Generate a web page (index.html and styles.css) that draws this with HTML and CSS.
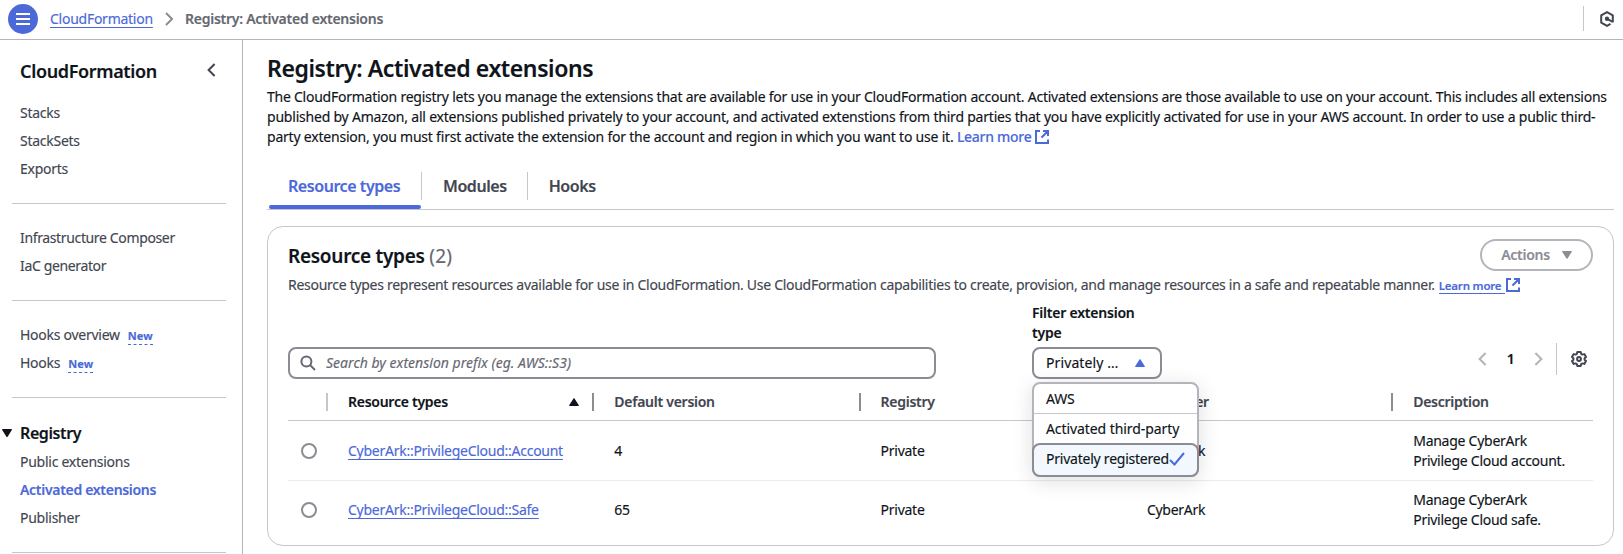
FILE: index.html
```html
<!DOCTYPE html>
<html lang="en">
<head>
<meta charset="utf-8">
<title>CloudFormation - Registry</title>
<link rel="stylesheet" href="styles.css">
</head>
<body>
<header class="topbar">
  <button class="menu-button" aria-label="Menu">
    <svg width="14" height="14" viewBox="0 0 14 14" fill="none" stroke="#fff" stroke-width="2"><path d="M0 2h14M0 7h14M0 12h14"/></svg>
  </button>
  <a class="link crumb" href="#">CloudFormation</a>
  <svg class="crumb-sep" width="8" height="14" viewBox="0 0 8 14" fill="none" stroke="#8c8c94" stroke-width="2"><path d="M1 1l6 6-6 6"/></svg>
  <span class="crumb-current">Registry: Activated extensions</span>
  <div class="tools">
    <svg width="16" height="18" viewBox="0 0 16 18" fill="none" stroke="#424650" stroke-width="2" stroke-linejoin="round"><path d="M13.8 12.2V5.4L8 2.1 2.2 5.4v7.2L8 15.9l3.5-2"/><circle cx="8" cy="8.8" r="1.2" fill="#424650"/><path d="M8 8.8l5.8 3"/></svg>
  </div>
</header>
<div class="layout">
  <nav class="sidebar">
    <div class="side-head">
      <h2>CloudFormation</h2>
      <svg width="9" height="14" viewBox="0 0 9 14" fill="none" stroke="#424650" stroke-width="2"><path d="M7.6 1L1.6 7l6 6"/></svg>
    </div>
    <ul class="nav-group">
      <li>Stacks</li><li>StackSets</li><li>Exports</li>
    </ul>
    <ul class="nav-group tight">
      <li>Infrastructure Composer</li><li>IaC generator</li>
    </ul>
    <ul class="nav-group">
      <li>Hooks overview<span class="new">New</span></li><li>Hooks<span class="new">New</span></li>
    </ul>
    <div class="section-title">
      <svg width="10" height="9" viewBox="0 0 10 9" fill="#0f141a"><path d="M.7 0h8.6q.9.2.5 1L5.6 7.8q-.6.7-1.2 0L.2 1Q-.1.2.7 0z"/></svg>
      <h3>Registry</h3>
    </div>
    <ul class="nav-group last">
      <li>Public extensions</li><li class="active">Activated extensions</li><li>Publisher</li>
    </ul>
  </nav>
  <main class="content">
    <h1>Registry: Activated extensions</h1>
    <p class="intro">
      <span class="l1">The CloudFormation registry lets you manage the extensions that are available for use in your CloudFormation account. Activated extensions are those available to use on your account. This includes all extensions</span>
      <span class="l2">published by Amazon, all extensions published privately to your account, and activated extenstions from third parties that you have explicitly activated for use in your AWS account. In order to use a public third-</span>
      <span class="l3">party extension, you must first activate the extension for the account and region in which you want to use it. <a class="learn" href="#">Learn more <svg class="ext" width="14" height="14" viewBox="0 0 14 14" fill="none" stroke="#4c69da" stroke-width="2"><path d="M5 1H1v12h12V9.5M8 1h5v5M13 1L6.5 7.5"/></svg></a></span>
    </p>
    <div class="tabs">
      <div class="tab selected"><span>Resource types</span></div>
      <div class="tab"><span>Modules</span></div>
      <div class="tab"><span>Hooks</span></div>
    </div>
    <section class="card">
      <div class="card-head">
        <h2>Resource types <span class="count">(2)</span></h2>
        <button class="actions">Actions
          <svg width="10" height="8" viewBox="0 0 10 8" fill="#8c8c94"><path d="M.6 0h8.8q.8.2.4.8L5.5 7.6q-.5.6-1 0L.2.8Q-.2.2.6 0z"/></svg>
        </button>
      </div>
      <p class="desc"><span>Resource types represent resources available for use in CloudFormation. Use CloudFormation capabilities to create, provision, and manage resources in a safe and repeatable manner.</span><a class="learn-small" href="#">Learn more</a><svg width="14" height="14" viewBox="0 0 14 14" fill="none" stroke="#4c69da" stroke-width="2"><path d="M5 1H1v12h12V9.5M8 1h5v5M13 1L6.5 7.5"/></svg></p>
      <div class="filters">
        <div class="search">
          <svg width="16" height="16" viewBox="0 0 16 16" fill="none" stroke="#656871" stroke-width="2"><circle cx="6.4" cy="6.4" r="5"/><path d="M10 10l5 5"/></svg>
          <span>Search by extension prefix (eg. AWS::S3)</span>
        </div>
        <div class="filter">
          <label>Filter extension type</label>
          <div class="select">
            <span>Privately …</span>
            <svg width="10" height="8" viewBox="0 0 10 8" fill="#4c69da"><path d="M.6 8h8.8q.8-.2.4-.8L5.5.4q-.5-.6-1 0L.2 7.2q-.4.6.4.8z"/></svg>
            <div class="dropdown">
              <div class="option">AWS</div>
              <div class="option wide">Activated third-party</div>
              <div class="option chosen">Privately registered<svg width="16" height="14" viewBox="0 0 16 14" fill="none" stroke="#4c69da" stroke-width="2"><path d="M1 8l4.5 4.5L15 1"/></svg></div>
            </div>
          </div>
        </div>
        <div class="pager">
          <svg width="9" height="14" viewBox="0 0 9 14" fill="none" stroke="#b4b4bb" stroke-width="2"><path d="M7.6 1L1.6 7l6 6"/></svg>
          <b>1</b>
          <svg width="9" height="14" viewBox="0 0 9 14" fill="none" stroke="#b4b4bb" stroke-width="2"><path d="M1.4 1l6 6-6 6"/></svg>
          <div class="prefs">
            <svg width="16" height="16" viewBox="0 0 16 16" fill="none" stroke="#424650" stroke-width="2" stroke-linejoin="round"><path d="M6.3 1h3.4l.5 1.9 1.2.7 1.9-.5L15 6l-1.4 1.3v1.4L15 10l-1.7 2.9-1.9-.5-1.2.7-.5 1.9H6.3l-.5-1.9-1.2-.7-1.9.5L1 10l1.4-1.3V7.3L1 6l1.7-2.9 1.9.5 1.2-.7z"/><circle cx="8" cy="8" r="1.9"/></svg>
          </div>
        </div>
      </div>
      <div class="table">
        <div class="row head">
          <div class="cell pick"></div>
          <div class="cell sorted">Resource types
            <svg width="10" height="8" viewBox="0 0 10 8" fill="#0f141a"><path d="M.6 8h8.8q.8-.2.4-.8L5.5.4q-.5-.6-1 0L.2 7.2q-.4.6.4.8z"/></svg>
          </div>
          <div class="cell">Default version</div>
          <div class="cell">Registry</div>
          <div class="cell">Publisher</div>
          <div class="cell">Description</div>
        </div>
        <div class="row">
          <div class="cell pick"><i class="radio"></i></div>
          <div class="cell"><a class="link" href="#">CyberArk::PrivilegeCloud::Account</a></div>
          <div class="cell">4</div>
          <div class="cell">Private</div>
          <div class="cell">CyberArk</div>
          <div class="cell">Manage CyberArk<br>Privilege Cloud account.</div>
        </div>
        <div class="row">
          <div class="cell pick"><i class="radio"></i></div>
          <div class="cell"><a class="link" href="#">CyberArk::PrivilegeCloud::Safe</a></div>
          <div class="cell">65</div>
          <div class="cell">Private</div>
          <div class="cell">CyberArk</div>
          <div class="cell">Manage CyberArk<br>Privilege Cloud safe.</div>
        </div>
      </div>
    </section>
  </main>
</div>
</body>
</html>
```
FILE: styles.css
```css
* { box-sizing: border-box; }
html, body { height: 100%; }
body {
  margin: 0;
  overflow: hidden;
  display: flex;
  flex-direction: column;
  background: #fff;
  color: #0f141a;
  font: 400 14px/20px "Noto Sans", "Open Sans", sans-serif;
  letter-spacing: -0.26px;
  -webkit-text-stroke: 0.15px;
}
h1, h2, h3, p, ul { margin: 0; padding: 0; }
ul { list-style: none; }
svg { display: block; flex: none; }
button { font: inherit; letter-spacing: inherit; padding: 0; border: 0; }

.link {
  color: #4c69da;
  text-decoration: underline 1px;
  text-underline-offset: 3px;
  text-decoration-skip-ink: none;
}

/* Top bar */
.topbar {
  flex: none;
  height: 40px;
  display: flex;
  align-items: center;
  padding: 0 8px 2px;
  border-bottom: 1px solid #b4b4bb;
}
.menu-button {
  width: 30px;
  height: 30px;
  border-radius: 50%;
  background: #4c69da;
  display: flex;
  align-items: center;
  justify-content: center;
}
.crumb { margin-left: 12px; width: 102px; white-space: nowrap; }
.crumb-sep { margin-left: 13px; }
.crumb-current { margin-left: 12px; font-weight: 600; color: #656871; }
.tools {
  margin-left: auto;
  height: 25px;
  width: 32px;
  padding-left: 15px;
  border-left: 1px solid #c6c6cd;
  display: flex;
  align-items: center;
}

.layout { flex: 1; min-height: 0; display: flex; }

/* Side navigation */
.sidebar {
  flex: none;
  width: 243px;
  padding: 21px 16px 0 12px;
  border-right: 1px solid #b4b4bb;
  color: #424650;
}
.side-head {
  display: flex;
  justify-content: space-between;
  height: 20px;
  margin-bottom: 18px;
  padding: 0 10px 0 8px;
}
.side-head h2 { font-size: 18px; line-height: 20px; font-weight: 600; letter-spacing: -0.35px; color: #0f141a; }
.side-head svg { margin-top: 2px; }
.nav-group {
  display: grid;
  gap: 8px;
  padding: 4px 8px 24px;
  margin-bottom: 20px;
  border-bottom: 1px solid #c6c6cd;
}
.tight { letter-spacing: -0.36px; }
.new {
  display: inline-block;
  margin-left: 8px;
  line-height: 15px;
  font-size: 11px;
  font-weight: 700;
  letter-spacing: 0.1px;
  color: #4c69da;
  border-bottom: 1px dashed #4c69da;
  height: 17px;
}
.nav-group li { height: 20px; white-space: nowrap; }
.section-title {
  display: flex;
  align-items: center;
  gap: 8px;
  margin-left: -10px;
  padding-top: 5px;
  height: 25px;
}
.section-title h3 { font-size: 16px; line-height: 20px; font-weight: 600; letter-spacing: -0.4px; color: #0f141a; }
.last { padding-top: 9px; }
.active { font-weight: 600; color: #4c69da; letter-spacing: -0.3px; }

/* Page content */
.content { flex: 1; min-width: 0; padding: 13px 9px 0 24px; display: flex; flex-direction: column; }
h1 { font-size: 23px; line-height: 30px; font-weight: 600; letter-spacing: -0.4px; }
.intro { margin-top: 4px; }
.intro > span { display: block; white-space: nowrap; }
.l1 { letter-spacing: -0.245px; }
.l2, .l3 { letter-spacing: -0.21px; }
.learn { color: #4c69da; font-weight: 500; text-decoration: none; letter-spacing: -0.28px; }
.ext { display: inline-block; vertical-align: -2px; }

.tabs { display: flex; height: 63px; padding-top: 20px; border-bottom: 1px solid #c6c6cd; }
.tab {
  display: flex;
  padding: 5px 21px 0;
  font-size: 16px;
  font-weight: 600;
  letter-spacing: -0.44px;
  color: #424650;
  position: relative;
}
.tab span { height: 28px; line-height: 28px; white-space: nowrap; }
.tab + .tab::before {
  content: "";
  position: absolute;
  left: -1px;
  top: 5px;
  height: 28px;
  width: 1px;
  background: #c6c6cd;
}
.tab.selected { color: #4c69da; margin: 0 1px 0 2px; padding: 5px 0 0 19px; width: 152px; }
.selected::after {
  content: "";
  position: absolute;
  left: 0;
  right: 0;
  bottom: 0;
  height: 4px;
  border-radius: 2px;
  background: #4c69da;
}

/* Resource types card */
.card {
  margin-top: 16px;
  height: 320px;
  border: 1px solid #c6c6cd;
  border-radius: 16px;
  padding: 12px 20px 0;
}
.card-head { display: flex; justify-content: space-between; height: 32px; }
.card-head h2 { font-size: 19px; line-height: 34px; font-weight: 600; letter-spacing: -0.28px; }
.count { font-weight: 400; color: #656871; letter-spacing: 0.2px; }
.actions {
  width: 113px;
  height: 32px;
  border: 2px solid #b4b4bb;
  border-radius: 16px;
  background: #fff;
  color: #8c8c94;
  font-weight: 600;
  display: flex;
  align-items: center;
  justify-content: center;
  gap: 12px;
}
.desc {
  display: flex;
  height: 20px;
  margin-top: 4px;
  color: #424650;
  white-space: nowrap;
  letter-spacing: -0.284px;
}
.desc svg { margin: 3px 0 0 1px; }
.learn-small {
  margin-left: 4px;
  width: 66px;
  height: 19px;
  line-height: 21px;
  font-size: 11.5px;
  font-weight: 600;
  letter-spacing: -0.2px;
  color: #4c69da;
  text-decoration: none;
  border-bottom: 1px solid #4c69da;
}
.filters { display: flex; align-items: flex-end; height: 84px; }
.search {
  width: 648px;
  height: 32px;
  border: 2px solid #8c8c94;
  border-radius: 8px;
  display: flex;
  align-items: center;
  padding-left: 10px;
  gap: 10px;
  color: #656871;
  font-style: italic;
  letter-spacing: 0.02px;
}
.filter { width: 130px; margin-left: 96px; }
.filter label { display: block; font-weight: 600; margin-bottom: 4px; letter-spacing: -0.22px; }
.select {
  position: relative;
  height: 32px;
  border: 2px solid #8c8c94;
  border-radius: 8px;
  display: flex;
  align-items: center;
  justify-content: space-between;
  padding: 0 15px 0 12px;
}
.select > span { letter-spacing: 0.1px; }
.dropdown {
  position: absolute;
  z-index: 2;
  left: -2px;
  top: 33px;
  width: 167px;
  height: 95px;
  background: #fff;
  border: 2px solid #b4b4bb;
  border-radius: 8px;
  box-shadow: 0 4px 20px 1px rgba(0, 7, 22, 0.12);
}
.option { height: 30px; padding: 5px 12px 0; white-space: nowrap; }
.option:first-child { border-bottom: 1px solid #c6c6cd; }
.wide { letter-spacing: -0.08px; }
.chosen {
  height: 34px;
  margin: -1px -2px 0;
  display: flex;
  align-items: center;
  background: #f2f8fd;
  border: 2px solid #8c8c94;
  border-radius: 8px;
  padding: 0 12px 2px;
  letter-spacing: -0.23px;
}
.pager { margin-left: auto; display: flex; align-items: center; height: 32px; margin-bottom: 4px; }
.pager b { font-weight: 600; width: 47px; text-align: center; }
.prefs {
  height: 32px;
  width: 37px;
  margin-left: 13px;
  padding-left: 14px;
  border-left: 1px solid #c6c6cd;
  display: flex;
  align-items: center;
}

/* Table */
.row {
  display: grid;
  grid-template-columns: 39px 266.3px 266.3px 266.3px 266.3px 1fr;
  align-items: center;
  height: 59px;
}
.row + .row + .row { border-top: 1px solid #ebebf0; }
.head { height: 42px; padding-top: 4px; border-bottom: 1px solid #c6c6cd; font-weight: 600; color: #424650; }
.cell { padding-left: 21px; white-space: nowrap; }
.pick { padding-left: 13px; }
.head .cell { height: 18px; line-height: 18px; margin-right: -1px; border-right: 2px solid #8c8c94; }
.head .cell:first-child { border-color: #c6c6cd; }
.head .cell:last-child { border-right: 0; }
.sorted { display: flex; align-items: center; justify-content: space-between; padding-right: 13px; color: #0f141a; }
.radio { display: block; width: 16px; height: 16px; border: 2px solid #8c8c94; border-radius: 50%; }
```
